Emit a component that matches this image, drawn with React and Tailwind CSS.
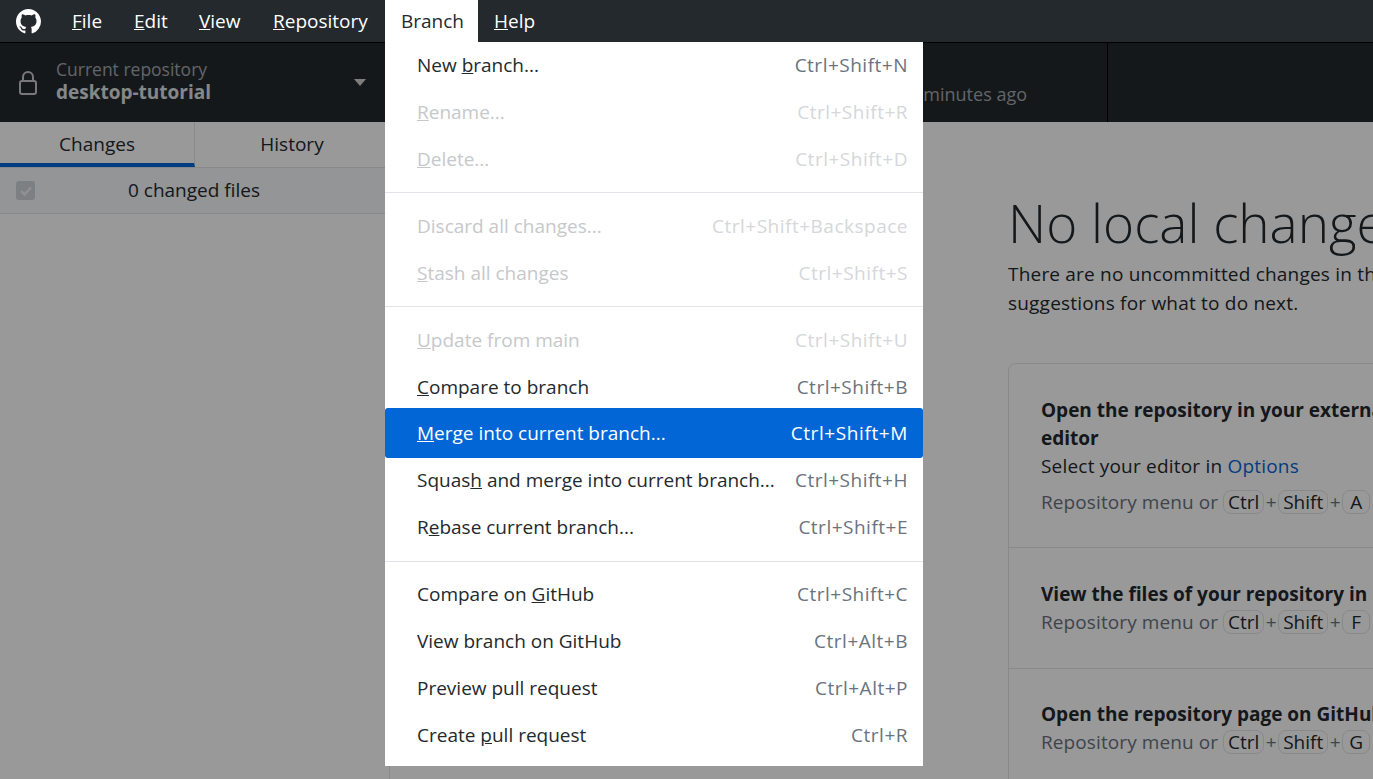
import React from "react";

const font = "font-['Open_Sans','Noto_Sans',sans-serif]";

// menu rows: text, key, disabled
const sections = [
  [
    { label: <>New <u>b</u>ranch...</>, keys: "Ctrl+Shift+N" },
    { label: <><u>R</u>ename...</>, keys: "Ctrl+Shift+R", off: true },
    { label: <><u>D</u>elete...</>, keys: "Ctrl+Shift+D", off: true },
  ],
  [
    { label: <>Discard all changes...</>, keys: "Ctrl+Shift+Backspace", off: true },
    { label: <><u>S</u>tash all changes</>, keys: "Ctrl+Shift+S", off: true },
  ],
  [
    { label: <><u>U</u>pdate from main</>, keys: "Ctrl+Shift+U", off: true },
    { label: <><u>C</u>ompare to branch</>, keys: "Ctrl+Shift+B" },
    { label: <><u>M</u>erge into current branch...</>, keys: "Ctrl+Shift+M", active: true },
    { label: <>Squas<u>h</u> and merge into current branch...</>, keys: "Ctrl+Shift+H" },
    { label: <>R<u>e</u>base current branch...</>, keys: "Ctrl+Shift+E" },
  ],
  [
    { label: <>Compare on <u>G</u>itHub</>, keys: "Ctrl+Shift+C" },
    { label: <>View branch on GitHub</>, keys: "Ctrl+Alt+B" },
    { label: <>Preview pull request</>, keys: "Ctrl+Alt+P" },
    { label: <>Create <u>p</u>ull request</>, keys: "Ctrl+R" },
  ],
];

function MenuRow({ row }) {
  if (row.active) {
    return (
      <div className="relative -mt-[3px] -mb-px flex h-[50px] items-center justify-between rounded-[3px] bg-[#0366d6] pl-8 pr-[15px] text-white">
        <span>{row.label}</span>
        <span className="tracking-[0.6px]">{row.keys}</span>
      </div>
    );
  }
  return (
    <div className={"flex h-[47px] items-center justify-between pl-8 pr-[15px] " + (row.off ? "text-[#c6c8cb]" : "text-[#24292e]")}>
      <span>{row.label}</span>
      <span className={"tracking-[0.5px] " + (row.off ? "text-[#d5d7da]" : "text-[#6a737d]")}>{row.keys}</span>
    </div>
  );
}

function BranchMenu() {
  return (
    <div className="absolute left-[385px] top-0 z-20 w-[538px] text-[19px]">
      <div className="flex h-[42px] w-[93px] items-center bg-white pl-4 text-[#24292e]">Branch</div>
      <div className="h-[724px] bg-white pb-[7px]">
        {sections.map((rows, i) => (
          <div key={i}>
            {i > 0 && i < 3 && <div className="mb-[10px] mt-[9px] h-px bg-[#e1e4e8]" />}
            {i === 3 && <div className="mb-[9px] mt-[10px] h-px bg-[#e1e4e8]" />}
            {rows.map((row, j) => <MenuRow key={j} row={row} />)}
          </div>
        ))}
      </div>
    </div>
  );
}

function Key({ k, w }) {
  return (
    <span className={"flex h-[24px] items-center justify-center rounded-[8px] border border-[#e1e4e8] text-[#24292e] " + w}>{k}</span>
  );
}

function Shortcut({ k }) {
  return (
    <div className="flex items-center whitespace-nowrap text-[#6a737d]">
      <span className="mr-[5px] tracking-[0.1px]">Repository menu or</span>
      <Key k="Ctrl" w="w-[41px]" />
      <span className="flex w-[14px] justify-center">+</span>
      <Key k="Shift" w="w-[50px]" />
      <span className="flex w-[14px] justify-center">+</span>
      <Key k={k} w="w-[28px]" />
    </div>
  );
}

export default function App() {
  return (
    <div className={"relative flex h-screen w-screen flex-col overflow-hidden bg-white text-[19px] " + font}>
      {/* title bar stays undimmed */}
      <div className="z-10 flex h-[42px] shrink-0 items-center bg-[#24292e] text-white">
        <svg viewBox="0 0 16 16" className="ml-[16px] h-[25px] w-[25px]" fill="#ffffff">
          <path d="M8 0C3.58 0 0 3.58 0 8c0 3.54 2.29 6.53 5.47 7.59.4.07.55-.17.55-.38 0-.19-.01-.82-.01-1.49-2.01.37-2.53-.49-2.69-.94-.09-.23-.48-.94-.82-1.13-.28-.15-.68-.52-.01-.53.63-.01 1.08.58 1.23.82.72 1.21 1.87.87 2.33.66.07-.52.28-.87.51-1.07-1.78-.2-3.64-.89-3.64-3.95 0-.87.31-1.59.82-2.15-.08-.2-.36-1.02.08-2.12 0 0 .67-.21 2.2.82.64-.18 1.32-.27 2-.27.68 0 1.36.09 2 .27 1.53-1.04 2.2-.82 2.2-.82.44 1.1.16 1.92.08 2.12.51.56.82 1.27.82 2.15 0 3.07-1.87 3.75-3.65 3.95.29.25.54.73.54 1.48 0 1.07-.01 1.93-.01 2.2 0 .21.15.46.55.38A8.013 8.013 0 0016 8c0-4.42-3.58-8-8-8z" />
        </svg>
        <span className="ml-[31px] w-[62px]"><u>F</u>ile</span>
        <span className="w-[65px]"><u>E</u>dit</span>
        <span className="w-[74px]"><u>V</u>iew</span>
        <span className="w-[221px]"><u>R</u>epository</span>
        <span><u>H</u>elp</span>
      </div>

      <div className="relative flex min-h-0 flex-1 flex-col">
        {/* toolbar */}
        <div className="flex h-[80px] shrink-0 border-t border-[#000000] bg-[#24292e]">
          <div className="flex w-[389px] items-center pl-[19px] pr-[23px]">
            <svg viewBox="0 0 18 24" className="h-[24px] w-[18px]" fill="none" stroke="#c8c9cb" strokeWidth="2">
              <rect x="1" y="10" width="16" height="13" rx="2" />
              <path d="M4 10V6a5 5 0 0 1 10 0v4" />
            </svg>
            <div className="mb-[4px] ml-[19px] flex-1">
              <div className="text-[17.5px] leading-[23px] text-[#a4a8ad]">Current repository</div>
              <div className="text-[19px] font-bold leading-[23px] text-[#dfe1e3]">desktop-tutorial</div>
            </div>
            <svg viewBox="0 0 12 7" className="h-[7px] w-[12px]" fill="#d0d1d3"><path d="M0 0h12L6 7z" /></svg>
          </div>
          <div className="flex w-[719px] items-end justify-end border-r border-[#000000] pb-[14px] pr-[80px] text-[18px] text-[#a4a8ad]">minutes ago</div>
        </div>

        {/* body */}
        <div className="flex min-h-0 flex-1">
          <div className="w-[390px] shrink-0 border-r border-[#e1e4e8]">
            <div className="flex h-[46px] border-b border-[#e1e4e8]">
              <div className="flex w-[195px] items-center justify-center border-b-[4px] border-r border-[#0366d6] border-r-[#e1e4e8] pt-[3px] text-[#24292e]">Changes</div>
              <div className="flex flex-1 items-center justify-center text-[#24292e]">History</div>
            </div>
            <div className="flex h-[46px] items-center border-b border-[#e1e4e8] bg-[#f6f8fa] pl-[16px]">
              <div className="flex h-[19px] w-[19px] items-center justify-center rounded-[3px] bg-[#d1d5da]">
                <svg viewBox="0 0 12 10" className="h-[10px] w-[12px]" fill="none" stroke="#f0f1f2" strokeWidth="2.4"><path d="M1 5l3.5 3.5L11 1.5" /></svg>
              </div>
              <div className="flex-1 pr-[36px] text-center text-[#24292e]">0 changed files</div>
            </div>
          </div>

          <div className="min-w-0 flex-1 pl-[618px]">
            <div className="w-[640px]">
              <h1 className="mt-[66px] whitespace-nowrap text-[53px] font-light leading-[70px] text-[#24292e]">No local changes</h1>
              <p className="mt-[2px] whitespace-nowrap leading-[29px] tracking-[0.2px] text-[#24292e]">
                There are no uncommitted changes in this repository. Here are some friendly<br />suggestions for what to do next.
              </p>
              <div className="mt-[45px] rounded-[8px] border border-[#e1e4e8]">
                <div className="h-[184px] border-b border-[#e1e4e8] px-[32px] pt-[32px]">
                  <div className="font-bold leading-[28px] text-[#24292e]">Open the repository in your external<br />editor</div>
                  <div className="leading-[28px] tracking-[0.2px] text-[#24292e]">Select your editor in <span className="text-[#0366d6]">Options</span></div>
                  <div className="mt-[8px]"><Shortcut k="A" /></div>
                </div>
                <div className="h-[121px] border-b border-[#e1e4e8] px-[32px] pt-[32px]">
                  <div className="whitespace-nowrap font-bold leading-[28px] text-[#24292e]">View the files of your repository in Explorer</div>
                  <Shortcut k="F" />
                </div>
                <div className="h-[121px] px-[32px] pt-[31px]">
                  <div className="whitespace-nowrap font-bold leading-[28px] text-[#24292e]">Open the repository page on GitHub in your browser</div>
                  <Shortcut k="G" />
                </div>
              </div>
            </div>
          </div>
        </div>

        {/* dim layer behind the open menu */}
        <div className="absolute inset-0 bg-black/40" />
      </div>

      <BranchMenu />
    </div>
  );
}
